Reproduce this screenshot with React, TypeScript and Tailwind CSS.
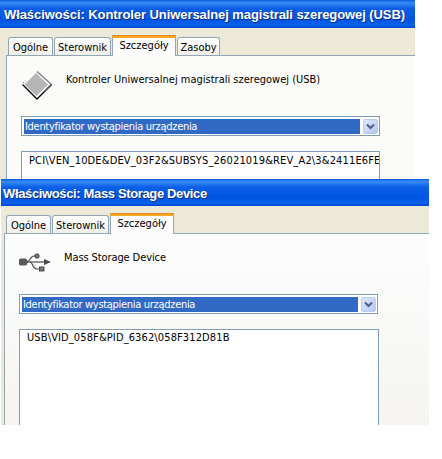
import React from "react";

const uiFont = { fontFamily: '"DejaVu Sans Condensed", "Liberation Sans", Arial, sans-serif' };
const titleFont = { fontFamily: '"Liberation Sans", Arial, sans-serif' };

function Tab({ label, active, w }: { label: string; active?: boolean; w: string }) {
  if (active) {
    return (
      <div className={`${w} h-[21px] -mb-px z-10 relative flex flex-col bg-[#fdfdfd] border-x border-[#91a7b4]`}>
        <div className="h-[3px] -mx-px bg-[#f5a623] rounded-t-[2px] border-t border-[#e68b2c]" />
        <div className="flex-1 text-center text-[11px] leading-[15px] text-black">{label}</div>
      </div>
    );
  }
  return (
    <div className={`${w} h-[18px] border border-b-0 border-[#91a7b4] rounded-t-[3px] bg-[linear-gradient(#ffffff,#f0efe8)] text-center text-[11px] leading-[19px] text-black`}>
      {label}
    </div>
  );
}

function Chevron() {
  return (
    <div className="w-[15px] h-[15px] rounded-[2px] border border-[#b9cdf0] bg-[linear-gradient(135deg,#dfe8fb,#b4c8f4)] flex items-center justify-center">
      <svg width="9" height="7" viewBox="0 0 9 7">
        <path d="M1 1.5 L4.5 5 L8 1.5" fill="none" stroke="#4d6185" strokeWidth="2" />
      </svg>
    </div>
  );
}

function Combo() {
  return (
    <div className="w-[359px] h-[20px] border border-[#7f9db9] bg-white flex items-start pt-[2px] pl-[2px] pr-[1px] gap-[3px]">
      <div className="w-[336px] h-[15px] bg-[#316ac5] text-white text-[11px] leading-[15px] pl-[1px] tracking-[-0.3px]">
        Identyfikator wystąpienia urządzenia
      </div>
      <Chevron />
    </div>
  );
}

function DiamondIcon() {
  return (
    <svg width="30" height="29" viewBox="0 0 30 29" className="block">
      <path d="M14 2 L26 13.5 L14.5 25 L2.5 13.5 Z" fill="#b6b6b6" />
      <path d="M15 0.5 L29.5 13.5" fill="none" stroke="#7a7a7a" strokeWidth="1.2" />
      <path d="M0.5 13.5 L15 28 L29.5 13.5" fill="none" stroke="#000" strokeWidth="1.3" />
      <path d="M22 21 L29.5 13.5" fill="none" stroke="#555" strokeWidth="1.2" />
      <rect x="1" y="11" width="1" height="1" fill="#00a0a0" />
    </svg>
  );
}

function UsbIcon() {
  return (
    <svg width="32" height="20" viewBox="0 0 32 20" className="block">
      <g fill="none" stroke="#4a4a4a" strokeWidth="1.2">
        <path d="M6 9 H27" />
        <path d="M8 9 C11 9 11 3 15 3 H17" />
        <path d="M11 9 C14 9 13 16 18 16 H21" />
      </g>
      <path d="M0 7 Q0 5.5 2 5.5 H6 Q8.5 5.5 8.5 9 Q8.5 12.5 6 12.5 H2 Q0 12.5 0 11 Z" fill="#5a5a5a" />
      <circle cx="18" cy="3" r="2.2" fill="#777" stroke="#333" strokeWidth="0.8" />
      <rect x="20.5" y="14" width="4.5" height="4" fill="#777" stroke="#333" strokeWidth="0.8" />
      <path d="M25 6 L32 9 L25 12 Z" fill="#4a4a4a" />
    </svg>
  );
}

const titleBar =
  "shrink-0 bg-[linear-gradient(#0a5be0_0%,#3a8cf5_10%,#0a5fe6_30%,#0054e3_70%,#0a62ec_90%,#0046c8_100%)] text-white font-bold text-[13px] whitespace-nowrap [text-shadow:1px_1px_0_#0f2f80]";

export default function App() {
  return (
    <div className="w-[442px] h-[459px] bg-white overflow-hidden" style={uiFont}>
      {/* First dialog */}
      <div className="w-[415px] h-[179px] overflow-hidden flex flex-col bg-[#ece9d8]">
        <div className={`h-[28px] pl-[4px] leading-[30px] tracking-[-0.08px] ${titleBar}`} style={titleFont}>
          Właściwości: Kontroler Uniwersalnej magistrali szeregowej (USB)
        </div>
        <div className="h-[27px] shrink-0 flex items-end pl-[8px] gap-[1px]">
          <Tab label="Ogólne" w="w-[45px]" />
          <Tab label="Sterownik" w="w-[57px]" />
          <Tab label="Szczegóły" w="w-[64px]" active />
          <Tab label="Zasoby" w="w-[43px]" />
        </div>
        <div className="flex-1 ml-[6px] border-t border-l border-[#91a7b4] bg-[#fbfbfa] pl-[14px]">
          <div className="h-[60px] flex">
            <div className="w-[45px] pt-[15px] pl-[1px]"><DiamondIcon /></div>
            <div className="pt-[17px] text-[11px] leading-[14px] text-black">Kontroler Uniwersalnej magistrali szeregowej (USB)</div>
          </div>
          <Combo />
          <div className="mt-[15px] w-[359px] h-[40px] border border-[#7f9db9] bg-white pl-[7px] pt-[2px] text-[11px] leading-[14px] text-black whitespace-nowrap overflow-hidden tracking-[0.15px]">
            PCI\VEN_10DE&amp;DEV_03F2&amp;SUBSYS_26021019&amp;REV_A2\3&amp;2411E6FE
          </div>
        </div>
      </div>

      {/* Second dialog */}
      <div className="ml-[1px] w-[428px] h-[246px] overflow-hidden flex flex-col bg-[#ece9d8]">
        <div className={`h-[27px] pl-[2px] leading-[29px] tracking-[-0.36px] ${titleBar}`} style={titleFont}>
          Właściwości: Mass Storage Device
        </div>
        <div className="h-[27px] shrink-0 flex items-end pl-[5px] gap-[1px]">
          <Tab label="Ogólne" w="w-[45px]" />
          <Tab label="Sterownik" w="w-[57px]" />
          <Tab label="Szczegóły" w="w-[64px]" active />
        </div>
        <div className="flex-1 ml-[3px] border-t border-l border-[#91a7b4] bg-[linear-gradient(#fdfdfe,#f5f4ef)] pl-[14px]">
          <div className="h-[60px] flex">
            <div className="w-[45px] pt-[19px]"><UsbIcon /></div>
            <div className="pt-[17px] text-[11px] leading-[14px] text-black tracking-[-0.1px]">Mass Storage Device</div>
          </div>
          <Combo />
          <div className="mt-[15px] w-[360px] h-[100px] border border-b-0 border-[#7f9db9] bg-white pl-[7px] pt-[1px] text-[11px] leading-[14px] text-black whitespace-nowrap tracking-[0.12px]">
            USB\VID_058F&amp;PID_6362\058F312D81B
          </div>
        </div>
      </div>
    </div>
  );
}
